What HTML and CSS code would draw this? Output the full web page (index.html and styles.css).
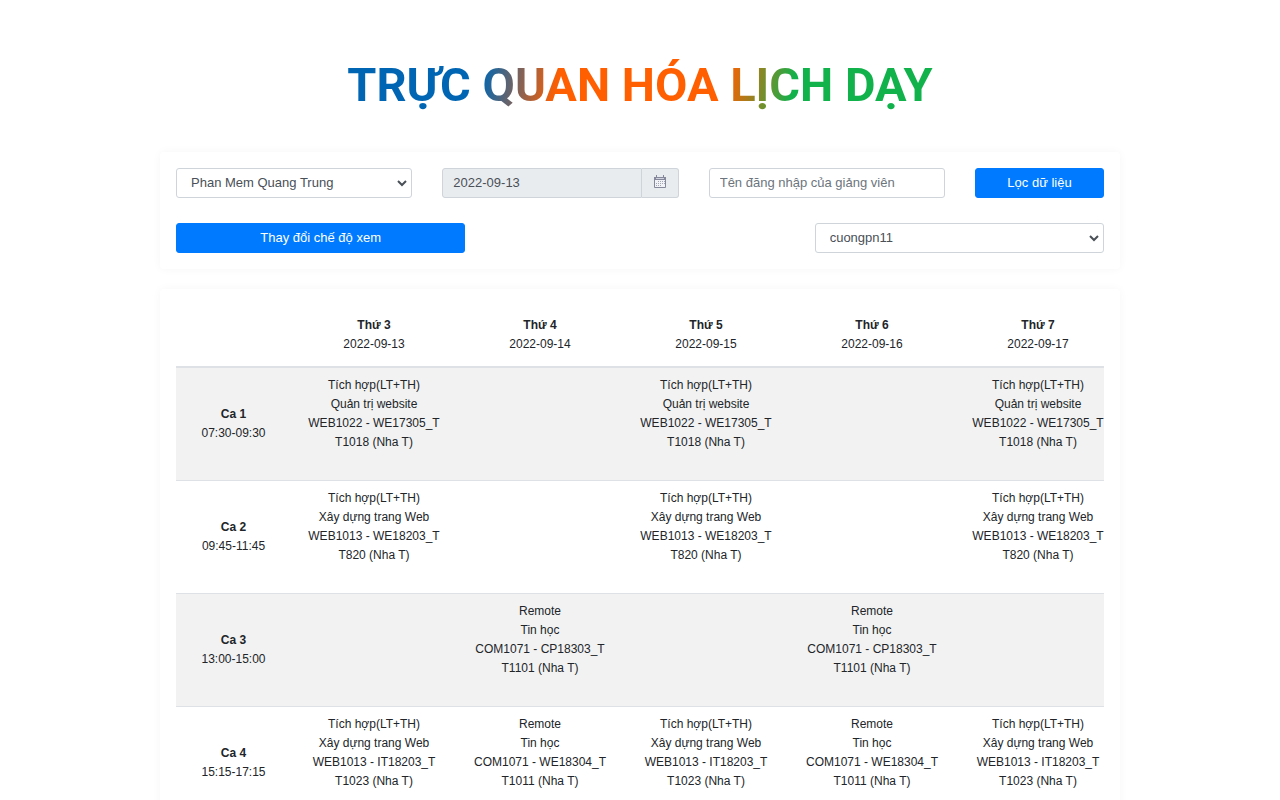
FILE: index.html
```
<!DOCTYPE html>
<html lang="vi">
<head>
<meta charset="utf-8">
<meta name="viewport" content="width=device-width, initial-scale=1">
<title>Trực quan hóa lịch dạy</title>
<link rel="stylesheet" href="styles.css">
</head>
<body>
<main class="page">
  <h1 class="title">TRỰC QUAN HÓA LỊCH DẠY</h1>

  <form class="card filters" onsubmit="return false">
    <div class="filter-row">
      <select class="control" aria-label="Cơ sở"><option>Phan Mem Quang Trung</option></select>
      <div class="date-group">
        <input class="control date-input" type="text" value="2022-09-13" readonly aria-label="Ngày">
        <button class="date-button" type="button" aria-label="Chọn ngày">
          <svg class="date-icon" viewBox="0 0 14 14" aria-hidden="true">
            <path d="M1.500 2.500h11v10h-11z" fill="#f0f2f6" stroke="#85879a"/>
            <path d="M1 2h12v3H1z" fill="#85879a"/>
            <path d="M3.500 0v3M10.500 0v3" stroke="#85879a"/>
            <path d="M3 3.500h8" stroke="#cfd2dc"/>
            <path d="M5 6.500h7M3 8.500h9M3 10.500h6" stroke="#a3a5b3" stroke-dasharray="1 1"/>
          </svg>
        </button>
      </div>
      <input class="control" type="text" placeholder="Tên đăng nhập của giảng viên" aria-label="Tên đăng nhập của giảng viên">
      <button class="button" type="submit">Lọc dữ liệu</button>
    </div>
    <div class="view-row">
      <button class="button" type="button">Thay đổi chế độ xem</button>
      <select class="control view-user" aria-label="Giảng viên"><option>cuongpn11</option></select>
    </div>
  </form>

  <section class="card">
    <div class="table-scroll">
      <table class="schedule">
        <colgroup><col class="col-slot"><col class="col-day"><col class="col-day"><col class="col-day"><col class="col-day"><col class="col-day"></colgroup>
        <thead>
          <tr>
            <td></td>
            <th scope="col">Thứ 3<span class="sub">2022-09-13</span></th>
            <th scope="col">Thứ 4<span class="sub">2022-09-14</span></th>
            <th scope="col">Thứ 5<span class="sub">2022-09-15</span></th>
            <th scope="col">Thứ 6<span class="sub">2022-09-16</span></th>
            <th scope="col">Thứ 7<span class="sub">2022-09-17</span></th>
          </tr>
        </thead>
        <tbody>
          <tr>
            <th scope="row">Ca 1<span class="sub">07:30-09:30</span></th>
            <td>Tích hợp(LT+TH)<br>Quản trị website<br>WEB1022 - WE17305_T<br>T1018 (Nha T)</td>
            <td></td>
            <td>Tích hợp(LT+TH)<br>Quản trị website<br>WEB1022 - WE17305_T<br>T1018 (Nha T)</td>
            <td></td>
            <td>Tích hợp(LT+TH)<br>Quản trị website<br>WEB1022 - WE17305_T<br>T1018 (Nha T)</td>
          </tr>
          <tr>
            <th scope="row">Ca 2<span class="sub">09:45-11:45</span></th>
            <td>Tích hợp(LT+TH)<br>Xây dựng trang Web<br>WEB1013 - WE18203_T<br>T820 (Nha T)</td>
            <td></td>
            <td>Tích hợp(LT+TH)<br>Xây dựng trang Web<br>WEB1013 - WE18203_T<br>T820 (Nha T)</td>
            <td></td>
            <td>Tích hợp(LT+TH)<br>Xây dựng trang Web<br>WEB1013 - WE18203_T<br>T820 (Nha T)</td>
          </tr>
          <tr>
            <th scope="row">Ca 3<span class="sub">13:00-15:00</span></th>
            <td></td>
            <td>Remote<br>Tin học<br>COM1071 - CP18303_T<br>T1101 (Nha T)</td>
            <td></td>
            <td>Remote<br>Tin học<br>COM1071 - CP18303_T<br>T1101 (Nha T)</td>
            <td></td>
          </tr>
          <tr>
            <th scope="row">Ca 4<span class="sub">15:15-17:15</span></th>
            <td>Tích hợp(LT+TH)<br>Xây dựng trang Web<br>WEB1013 - IT18203_T<br>T1023 (Nha T)</td>
            <td>Remote<br>Tin học<br>COM1071 - WE18304_T<br>T1011 (Nha T)</td>
            <td>Tích hợp(LT+TH)<br>Xây dựng trang Web<br>WEB1013 - IT18203_T<br>T1023 (Nha T)</td>
            <td>Remote<br>Tin học<br>COM1071 - WE18304_T<br>T1011 (Nha T)</td>
            <td>Tích hợp(LT+TH)<br>Xây dựng trang Web<br>WEB1013 - IT18203_T<br>T1023 (Nha T)</td>
          </tr>
        </tbody>
      </table>
    </div>
  </section>
</main>
</body>
</html>
```
FILE: styles.css
```
*, *::before, *::after { box-sizing: border-box; }

html { scrollbar-width: none; }

body {
  margin: 0;
  background: #fff;
  color: #212529;
  font: 13px/19px "Liberation Sans", Arial, sans-serif;
}

.page {
  display: flex;
  flex-direction: column;
  gap: 20px;
  max-width: 960px;
  margin: 0 auto;
  padding-bottom: 20px;
}

.title {
  margin: 0;
  padding: 55px 0 17px;
  font: 700 47px/60px Roboto, "Liberation Sans", sans-serif;
  text-align: center;
  color: transparent;
  background: linear-gradient(100deg, #0066b3 34%, #ff5f00 42%, #ff5f00 59%, #11b14b 66%);
  -webkit-background-clip: text;
  background-clip: text;
}

.card {
  padding: 16px;
  border-radius: 4px;
  background: #fff;
  box-shadow: 0 0 10px rgba(0, 0, 0, 0.04);
}

.filters { display: grid; gap: 25px; }

.filter-row {
  display: grid;
  grid-template-columns: 11fr 11fr 11fr 6fr;
  gap: 30px;
}

.view-row {
  display: grid;
  grid-template-columns: repeat(3, 1fr);
  gap: 30px;
}

.view-user { grid-column: 3; }

.control {
  width: 100%;
  min-width: 0;
  height: 30px;
  padding: 4px 10px 5px;
  border: 1px solid #ced4da;
  border-radius: 3px;
  background: #fff;
  color: #495057;
  font: inherit;
}

select.control {
  appearance: none;
  padding-left: 14px;
  background: #fff url("data:image/svg+xml,%3Csvg xmlns='http://www.w3.org/2000/svg' width='10' height='7'%3E%3Cpath d='M1 1l4 4 4-4' fill='none' stroke='%23495057' stroke-width='2'/%3E%3C/svg%3E") no-repeat right 4px center;
}

.control::placeholder { color: #6c757d; opacity: 1; }

.date-group { display: flex; min-width: 0; }

.date-input {
  flex: 1;
  border-radius: 3px 0 0 3px;
  background: #e9ecef;
}

.date-button {
  display: flex;
  align-items: center;
  justify-content: center;
  width: 37px;
  height: 30px;
  padding: 0 0 2px;
  border: 1px solid #ced4da;
  border-left: 0;
  border-radius: 0 3px 3px 0;
  background: #e9ecef;
}

.date-icon { width: 14px; height: 14px; }

.button {
  height: 30px;
  padding: 0 10px 2px;
  border: 1px solid #007bff;
  border-radius: 3px;
  background: #007bff;
  color: #fff;
  font: inherit;
}

.table-scroll { overflow-x: auto; scrollbar-width: none; }

.schedule {
  width: 945px;
  table-layout: fixed;
  border-collapse: collapse;
  font-size: 12px;
  text-align: center;
}

.col-slot { width: 115px; }
.col-day { width: 166px; }

.schedule th, .schedule td { padding: 0; }

.schedule thead th, .schedule thead td {
  padding: 11px 0 12px;
  border-bottom: 2px solid #dee2e6;
}

.schedule tbody th, .schedule tbody td {
  height: 113px;
  padding-top: 8px;
  border-top: 1px solid #dee2e6;
  vertical-align: top;
}

.schedule tbody th { padding: 0; vertical-align: middle; }

.schedule tbody tr:nth-child(odd) { background: #f2f2f2; }

.sub { display: block; font-weight: 400; }
```
